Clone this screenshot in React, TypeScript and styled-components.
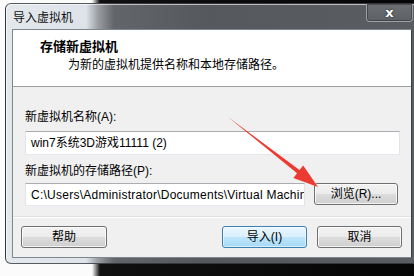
import styled, { createGlobalStyle } from 'styled-components';

const GlobalStyle = createGlobalStyle`
    html, body {
        margin: 0;
        padding: 0;
        height: 276px;
        overflow: hidden;
    }
    body {
        background: linear-gradient(to right, #fbfbfb 0, #fbfbfb 92px, #101010 100px, #050505 100%);
        font-family: "Liberation Sans", "Noto Sans CJK SC", sans-serif;
        font-size: 12px;
        color: #000;
    }
`;

const Desktop = styled.div`
    position: relative;
    width: 414px;
    height: 276px;
    overflow: hidden;
    padding-top: 3px;
    box-sizing: border-box;
`;

const Window = styled.div`
    margin-left: 5px;
    width: 414px;
    box-sizing: border-box;
    border: 1px solid rgba(40, 44, 50, 0.75);
    border-radius: 6px;
    padding: 0 6px 5px 6px;
    background: linear-gradient(to right, #e3e8ed 0, #dde3e9 80px, #9a9ea3 92px, #62666b 108px, #55595e 200px, #5a5e63 100%);
    box-shadow: inset 1px 1px 0 rgba(255, 255, 255, 0.6);
`;

const TitleBar = styled.div`
    display: flex;
    align-items: flex-start;
    height: 25px;
`;

const Title = styled.span`
    margin-top: 5px;
    margin-left: 1px;
    font-family: "Noto Sans CJK SC", sans-serif;
    font-size: 12px;
    line-height: 15px;
    color: #111;
`;

const CloseButton = styled.div`
    margin-left: auto;
    margin-right: -1px;
    width: 45px;
    height: 17px;
    display: flex;
    align-items: center;
    justify-content: center;
    border: 1px solid rgba(190, 195, 200, 0.6);
    border-top: none;
    border-radius: 0 0 4px 4px;
    background: linear-gradient(#6b6f74, #5d6166);
    box-shadow: inset 0 0 0 1px rgba(40, 40, 40, 0.5);
    color: #fff;
    font-family: "DejaVu Sans", sans-serif;
    font-weight: 700;
    font-size: 13px;
    line-height: 12px;
    text-shadow: 0 0 2px rgba(0, 0, 0, 0.8);
`;

const Client = styled.div`
    border: 1px solid #80868d;
    border-right-color: #3c3f43;
    background: #f0f0f0;
`;

const Header = styled.div`
    height: 57px;
    box-sizing: border-box;
    background: #fff;
    border-bottom: 1px solid #a0a0a0;
    padding-top: 7px;
    font-family: "Noto Sans CJK SC", sans-serif;
`;

const HeaderTitle = styled.div`
    padding-left: 27px;
    font-size: 13px;
    font-weight: 700;
    line-height: 18px;
`;

const HeaderSub = styled.div`
    padding-left: 55px;
    font-size: 12px;
    line-height: 18px;
`;

const Content = styled.div`
    padding: 22px 11px 10px 12px;
    display: flex;
    flex-direction: column;
`;

const Label = styled.label<{ $gap?: number }>`
    line-height: 16px;
    height: 16px;
    margin-top: ${p => p.$gap ?? 0}px;
`;

const TextBox = styled.div<{ $h: number; $gap?: number; $spacing?: number }>`
    height: ${p => p.$h}px;
    margin-top: ${p => p.$gap ?? 0}px;
    box-sizing: border-box;
    background: #fff;
    border: 1px solid #e2e3ea;
    border-top-color: #abadb3;
    border-bottom-color: #e3e9ef;
    padding-left: 5px;
    display: flex;
    align-items: center;
    white-space: nowrap;
    overflow: hidden;
    line-height: 16px;
    letter-spacing: ${p => p.$spacing ?? 0}px;
`;

const PathRow = styled.div`
    display: flex;
    align-items: flex-start;
    gap: 9px;
    margin-top: 4px;
    padding-right: 2px;

    ${TextBox} {
        flex: 1;
        min-width: 0;
    }
`;

const Button = styled.button<{ $primary?: boolean; $w: number }>`
    width: ${p => p.$w}px;
    height: 22px;
    padding: 0;
    border-radius: 3px;
    border: 1px solid ${p => (p.$primary ? '#3c7fb1' : '#707070')};
    background: ${p =>
        p.$primary
            ? 'linear-gradient(#eaf6fd 0%, #d9f0fc 50%, #bee6fd 50%, #a7d9f5 100%)'
            : 'linear-gradient(#f2f2f2 0%, #ebebeb 50%, #dddddd 50%, #cfcfcf 100%)'};
    box-shadow: inset 0 0 0 1px ${p => (p.$primary ? 'rgba(255,255,255,0.55)' : 'rgba(255,255,255,0.75)')};
    font-family: "Liberation Sans", "Noto Sans CJK SC", sans-serif;
    font-size: 12px;
    line-height: 16px;
    color: #000;
`;

const Footer = styled.div`
    border-top: 1px solid #dfdfdf;
    box-shadow: inset 0 1px 0 #fff;
    padding: 9px 9px 9px 8px;
    display: flex;
    gap: 10px;
`;

const Spacer = styled.div`
    flex: 1;
`;

const Arrow = styled.svg`
    position: absolute;
    left: 0;
    top: 0;
    pointer-events: none;
`;

export default function App() {
    return (
        <Desktop>
            <GlobalStyle />
            <Window>
                <TitleBar>
                    <Title>导入虚拟机</Title>
                    <CloseButton>x</CloseButton>
                </TitleBar>
                <Client>
                    <Header>
                        <HeaderTitle>存储新虚拟机</HeaderTitle>
                        <HeaderSub>为新的虚拟机提供名称和本地存储路径。</HeaderSub>
                    </Header>
                    <Content>
                        <Label>新虚拟机名称(A):</Label>
                        <TextBox $h={24} $gap={6}>win7系统3D游戏11111 (2)</TextBox>
                        <Label $gap={8}>新虚拟机的存储路径(P):</Label>
                        <PathRow>
                            <TextBox $h={23} $spacing={0.25}>C:\Users\Administrator\Documents\Virtual Machine</TextBox>
                            <Button $w={84}>浏览(R)...</Button>
                        </PathRow>
                    </Content>
                    <Footer>
                        <Button $w={86}>帮助</Button>
                        <Spacer />
                        <Button $w={85} $primary>导入(I)</Button>
                        <Button $w={85}>取消</Button>
                    </Footer>
                </Client>
            </Window>
            <Arrow width="414" height="276" viewBox="0 0 414 276">
                <polygon
                    points="228,117 299.5,170.1 303.2,165.4 318,187 293.4,178 297.1,173.3"
                    fill="#ec3b30"
                />
            </Arrow>
        </Desktop>
    );
}
